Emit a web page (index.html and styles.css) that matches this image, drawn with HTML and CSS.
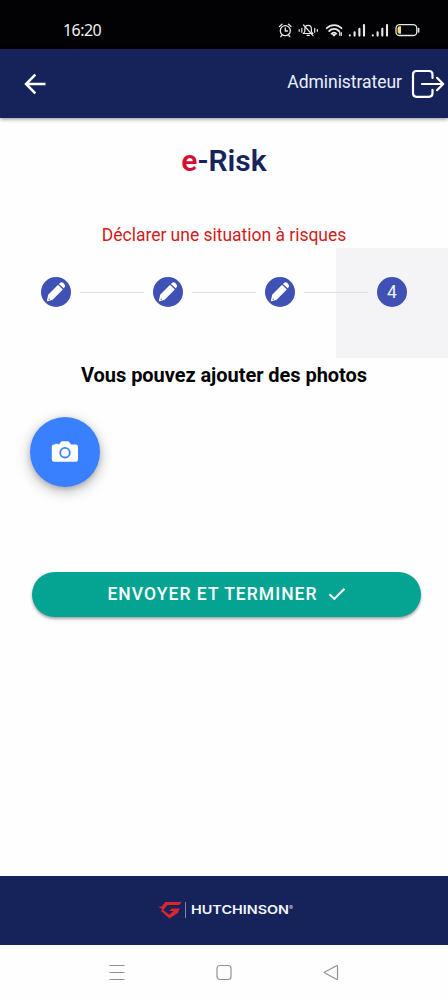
FILE: index.html
```html
<!DOCTYPE html>
<html lang="fr">
<head>
<meta charset="utf-8">
<meta name="viewport" content="width=device-width">
<title>e-Risk</title>
<link rel="stylesheet" href="styles.css">
</head>
<body>
<div class="screen">
  <div class="status">
    <span class="time">16:20</span>
    <svg class="status-icons" width="142" height="18" viewBox="278 21 142 18" fill="none" stroke="#e8e8e8" stroke-width="1.3" stroke-linecap="round">
      <circle cx="285.3" cy="30.7" r="5"/><path d="M285.3 28v3h2.2M279.5 26.5l2.5-2.2M291 26.5l-2.5-2.2M281.8 35.5l-1 1.2M288.8 35.5l1 1.2"/>
      <path d="M303.5 33.5h9.2l-1.3-2v-2.3c0-5-6.4-5-6.6 0v2.3zM307 35.3h2.4M303.5 25l9.5 10.7M301.8 28.3v4M299.2 29.5v1.8M314.7 28.3v4M317.3 29.5v1.8" stroke-width="1.2"/>
      <path d="M326.7 28.2c4.2-4.2 10.6-4.2 14.8 0M329.2 31c2.7-2.7 7-2.7 9.7 0M331.7 33.6c1.5-1.3 3-1.3 4.5 0" stroke-width="1.8"/><path d="M333 34.7h2l-1 1.1z" fill="#e8e8e8"/><path d="M339.7 31.5v3.8M341.3 32.5v3" stroke-width="1.2"/>
      <path d="M349.8 35.2v.3M354.6 32.2v3.4M359.4 28.8v6.8M364 25v10.6M372.8 35.2v.3M377.6 32.2v3.4M382.3 28.8v6.8M387 25v10.6" stroke-width="2.1"/>
      <rect x="396" y="24.7" width="20.8" height="10.8" rx="3.6"/><path d="M418.6 28.5v3.5" stroke-width="1.6"/><path d="M401 26.3h-1.4q-2 0-2 2v3.5q0 2 2 2h1.4z" fill="#f4d77c" stroke="none"/>
    </svg>
  </div>
  <header class="header">
    <svg class="back" width="24" height="22" viewBox="0 0 24 22" fill="none" stroke="#fff" stroke-width="2.5"><path d="M22.5 11H3M12.3 1.7L3 11l9.3 9.3"/></svg>
    <span class="user">Administrateur</span>
    <svg class="logout" width="34" height="30" viewBox="0 0 34 30" fill="none" stroke="#fff" stroke-width="2.2" stroke-linecap="round" stroke-linejoin="round"><path d="M21.5 9V5.5Q21.5 2 18 2H5.5Q2 2 2 5.5v18.8q0 3.5 3.5 3.5H18q3.5 0 3.5-3.5v-3.5M11 15h21M26 8.8l6.2 6.2-6.2 6.2"/></svg>
  </header>
  <main class="main">
    <h1 class="title"><span class="accent">e</span>-Risk</h1>
    <p class="subtitle">Déclarer une situation à risques</p>
    <div class="stepper">
      <div class="step"><span class="dot"><svg width="30" height="30" viewBox="0 0 30 30"><path fill="#fff" d="M7.200 17.700L17.100 7.800l4.700 4.700-10.100 10.200-4.800 1.500q-1.200.2-.9-1zM18 6.900l1.100-1.100q1.500-1.300 3 0l1.500 1.600q1.300 1.500 0 2.900l-1 1z"/><path fill="#3f51b5" d="M8 21.200l1.200 1.200-1.700.500z"/></svg></span></div>
      <div class="step"><span class="dot"><svg width="30" height="30" viewBox="0 0 30 30"><path fill="#fff" d="M7.200 17.700L17.100 7.800l4.700 4.700-10.100 10.200-4.800 1.500q-1.200.2-.9-1zM18 6.900l1.100-1.100q1.500-1.300 3 0l1.500 1.600q1.300 1.500 0 2.900l-1 1z"/><path fill="#3f51b5" d="M8 21.200l1.200 1.200-1.700.500z"/></svg></span></div>
      <div class="step"><span class="dot"><svg width="30" height="30" viewBox="0 0 30 30"><path fill="#fff" d="M7.200 17.700L17.100 7.800l4.700 4.700-10.100 10.200-4.800 1.500q-1.200.2-.9-1zM18 6.900l1.100-1.100q1.500-1.300 3 0l1.500 1.600q1.300 1.500 0 2.900l-1 1z"/><path fill="#3f51b5" d="M8 21.200l1.200 1.200-1.700.500z"/></svg></span></div>
      <div class="step active"><span class="dot">4</span></div>
    </div>
    <h2 class="prompt">Vous pouvez ajouter des photos</h2>
    <button class="camera" aria-label="Photo"><svg width="28" height="24" viewBox="0 0 28 24"><path fill="#fff" d="M3.200 4.600h1V3.800h3v.8h.8l2-2.800q.4-.6 1.200-.6h5.600q.8 0 1.200.6l2 2.800h4.600q2.400 0 2.400 2.400v12.400q0 2.400-2.400 2.400H3.200Q.8 21.800.8 19.400V7q0-2.400 2.400-2.400z"/><circle cx="14" cy="12.700" r="4.800" fill="#fff" stroke="#3880ff" stroke-width="1.800"/></svg></button>
    <button class="submit"><span>ENVOYER ET TERMINER</span><svg width="18" height="14" viewBox="0 0 18 14" fill="none" stroke="#fff" stroke-width="2.1"><path d="M1.500 7.200l4.800 4.700L16.500 1.800"/></svg></button>
  </main>
  <footer class="footer">
    <svg width="140" height="20" viewBox="157 900 140 20">
      <path d="M158 906.800h3.500l3.900-4.800h16.300l-2.500 3h-11.700l-4.200 5 6 4.700 4.200-3.600h-4.400l2.900-2.700h7.700l-1.700 4.300-8.500 5.700-8.500-7.400 1.300-2z" fill="#df2430"/>
      <path d="M185.500 902v16" stroke="#7c86ad" stroke-width="1"/>
      <text class="brand" x="191" y="914" textLength="98" lengthAdjust="spacingAndGlyphs">HUTCHINSON</text>
      <text class="reg" x="289" y="910">®</text>
    </svg>
  </footer>
  <nav class="nav">
    <svg width="18" height="18" viewBox="0 0 18 18"><path d="M1.500 1.500h15M1.500 8.500h15M1.500 15.500h15"/></svg>
    <svg width="18" height="18" viewBox="0 0 18 18"><rect x="2" y="1.500" width="14" height="14" rx="3"/></svg>
    <svg width="18" height="18" viewBox="0 0 18 18"><path d="M15.500 2.200v12.600q0 1-1 .5L2.800 9.100q-1-.6 0-1.200l11.700-6.200q1-.5 1 .5z"/></svg>
  </nav>
</div>
</body>
</html>
```
FILE: styles.css
```css
* { box-sizing: border-box; }
body { margin: 0; background: #fefefe; font-family: Roboto, sans-serif; }
h1, h2, p { margin: 0; }
button { border: 0; padding: 0; font-family: inherit; color: #fff; }
svg { display: block; flex: none; }
.screen { width: 448px; height: 1000px; display: grid; grid-template-rows: 49px 69px 758px 69px 55px; overflow: hidden; white-space: nowrap; }
.status { background: #020204; color: #f0f0f0; display: flex; justify-content: space-between; align-items: flex-start; padding: 21px 28px 0 63px; }
.time { font: 16px/19px "Noto Sans", sans-serif; letter-spacing: -.55px; }
.header { background: #16235b; color: #e9f0fb; display: flex; align-items: center; padding: 0 3px 0 23px; box-shadow: 0 1px 4px rgba(0, 0, 0, .45); z-index: 1; }
.user { margin-left: auto; margin-bottom: 3px; font-size: 17.500px; letter-spacing: -.04px; line-height: 22px; }
.logout { margin-left: 9px; }
.main { display: flex; flex-direction: column; align-items: center; padding-top: 23px; }
.title { font-size: 30px; line-height: 40px; font-weight: 600; color: #17245c; }
.accent { color: #d40f32; }
.subtitle { margin-top: 42px; font-size: 17.500px; letter-spacing: -.02px; line-height: 24px; color: #d01c20; }
.stepper { width: 448px; height: 110px; margin-top: 1px; display: grid; grid-template-columns: repeat(4, 1fr); }
.step { display: flex; align-items: flex-start; padding: 29px 0 0 41px; position: relative; }
.step:not(:last-child)::after { content: ""; position: absolute; left: 80px; top: 44px; width: 64px; height: 1px; background: #dedee0; z-index: 1; }
.active { background: #f4f3f5; }
.dot { width: 30px; height: 30px; border-radius: 50%; background: #3f51b5; color: #f5f6fc; display: grid; place-items: center; font-size: 17.500px; }
.prompt { margin-top: 4px; font-size: 20px; letter-spacing: -.05px; line-height: 26px; font-weight: 700; color: #050505; }
.camera { align-self: flex-start; width: 70px; height: 70px; margin: 29px 0 0 30px; border-radius: 50%; background: #3880ff; display: grid; place-items: center; box-shadow: 0 4px 14px rgba(0, 0, 0, .28), 0 2px 5px rgba(0, 0, 0, .16); }
.submit { width: 389px; height: 45px; margin: 85px 0 0 5px; padding-bottom: 2px; border-radius: 23px; background: #05a391; display: flex; justify-content: center; align-items: center; gap: 10px; font-size: 17.500px; font-weight: 500; letter-spacing: 1.030px; box-shadow: 0 2px 3px rgba(0, 0, 0, .35); }
.footer { background: #16235b; padding: 24px 0 0 157px; }
.brand { font: 600 12px Inter, sans-serif; fill: #f4f7ff; }
.reg { font: 6px Inter, sans-serif; fill: #cbd2e6; }
.nav { background: #fefefe; display: flex; align-items: center; gap: 89px; padding-left: 108px; }
.nav svg { fill: none; stroke: #929292; stroke-width: 1.200; }
```
